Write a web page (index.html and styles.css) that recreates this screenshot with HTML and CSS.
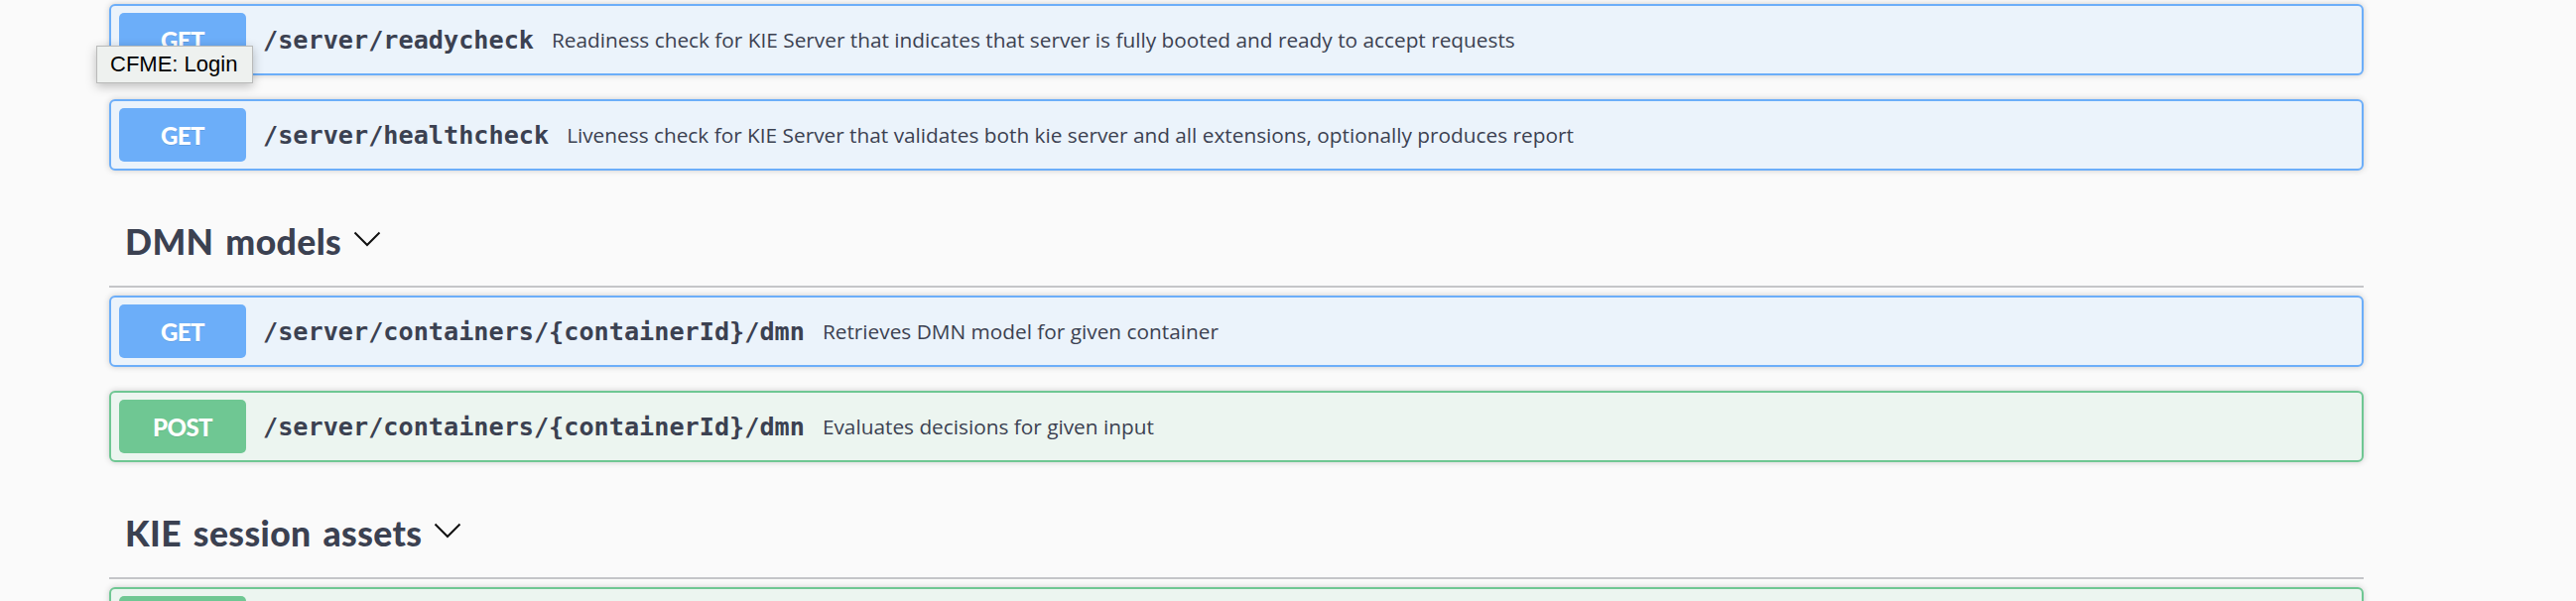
FILE: index.html
```html
<!DOCTYPE html>
<html lang="en">
<head>
<meta charset="utf-8">
<title>KIE Server API</title>
<link rel="stylesheet" href="styles.css">
</head>
<body>
<div class="page">
  <div class="op get">
    <span class="method">GET</span>
    <span class="path">/server/readycheck</span>
    <span class="desc">Readiness check for KIE Server that indicates that server is fully booted and ready to accept requests</span>
  </div>
  <div class="op get">
    <span class="method">GET</span>
    <span class="path">/server/healthcheck</span>
    <span class="desc">Liveness check for KIE Server that validates both kie server and all extensions, optionally produces report</span>
  </div>

  <section class="tag">
    <h4 class="tag-title"><span>DMN models</span><svg class="chev" viewBox="0 0 28 16" width="28" height="16"><polyline points="1.5,1.5 14,14 26.5,1.5"/></svg></h4>
    <div class="op get">
      <span class="method">GET</span>
      <span class="path">/server/containers/{containerId}/dmn</span>
      <span class="desc">Retrieves DMN model for given container</span>
    </div>
    <div class="op post">
      <span class="method">POST</span>
      <span class="path">/server/containers/{containerId}/dmn</span>
      <span class="desc">Evaluates decisions for given input</span>
    </div>
  </section>

  <section class="tag">
    <h4 class="tag-title"><span>KIE session assets</span><svg class="chev" viewBox="0 0 28 16" width="28" height="16"><polyline points="1.5,1.5 14,14 26.5,1.5"/></svg></h4>
    <div class="op post">
      <span class="method"></span>
    </div>
  </section>
</div>
<div class="tooltip">CFME: Login</div>
</body>
</html>
```
FILE: styles.css
```css
html, body {
  margin: 0;
  padding: 0;
}
body {
  background: #fafafa;
  position: relative;
  height: 606px;
  overflow: hidden;
  color: #3b4151;
}
.page {
  padding: 4px 214px 0 110px;
  display: flex;
  flex-direction: column;
}
.tag {
  display: flex;
  flex-direction: column;
}
.op {
  box-sizing: border-box;
  height: 72px;
  margin-bottom: 24px;
  border: 2px solid;
  border-radius: 6px;
  padding: 0 8px;
  display: flex;
  align-items: center;
  box-shadow: 0 0 6px rgba(0,0,0,0.19);
  white-space: nowrap;
}
.op.get {
  background: #ebf3fb;
  border-color: #6caef9;
}
.op.post {
  background: #ecf5f0;
  border-color: #6fc793;
}
.method {
  box-sizing: border-box;
  width: 128px;
  height: 54px;
  flex: none;
  border-radius: 5px;
  display: flex;
  align-items: center;
  justify-content: center;
  color: #fff;
  font-family: "Lato", sans-serif;
  font-weight: 900;
  font-size: 24px;
  letter-spacing: -0.5px;
  text-shadow: 0 1px 0 rgba(0,0,0,0.1);
}
.get .method { background: #6caef9; }
.post .method { background: #6fc793; }
.path {
  margin-left: 17px;
  font-family: "DejaVu Sans Mono", "Liberation Mono", monospace;
  font-weight: 700;
  font-size: 25.2px;
  color: #3b4151;
}
.desc {
  margin-left: 18px;
  font-family: "Open Sans", sans-serif;
  font-size: 20.8px;
  color: #3b4151;
}
.tag-title {
  margin: 0 0 8px 0;
  height: 63px;
  padding: 29px 0 0 16px;
  border-bottom: 2px solid #c4c5c8;
  display: flex;
  align-items: flex-start;
  font-family: "Lato", sans-serif;
  font-weight: 900;
  font-size: 35.5px;
  line-height: 37px;
  letter-spacing: 0.4px;
  word-spacing: 3px;
  color: #3b4151;
}
.chev {
  margin: 8px 0 0 12px;
  fill: none;
  stroke: #111;
  stroke-width: 2;
}
.tooltip {
  position: absolute;
  left: 97px;
  top: 46px;
  box-sizing: border-box;
  height: 38px;
  padding: 0 15px 0 13px;
  background: #eef1ef;
  border: 1px solid #b9bab9;
  box-shadow: 0 3px 10px rgba(0,0,0,0.25);
  font-family: "Liberation Sans", Arial, sans-serif;
  font-size: 22px;
  line-height: 36px;
  color: #000;
}
```
